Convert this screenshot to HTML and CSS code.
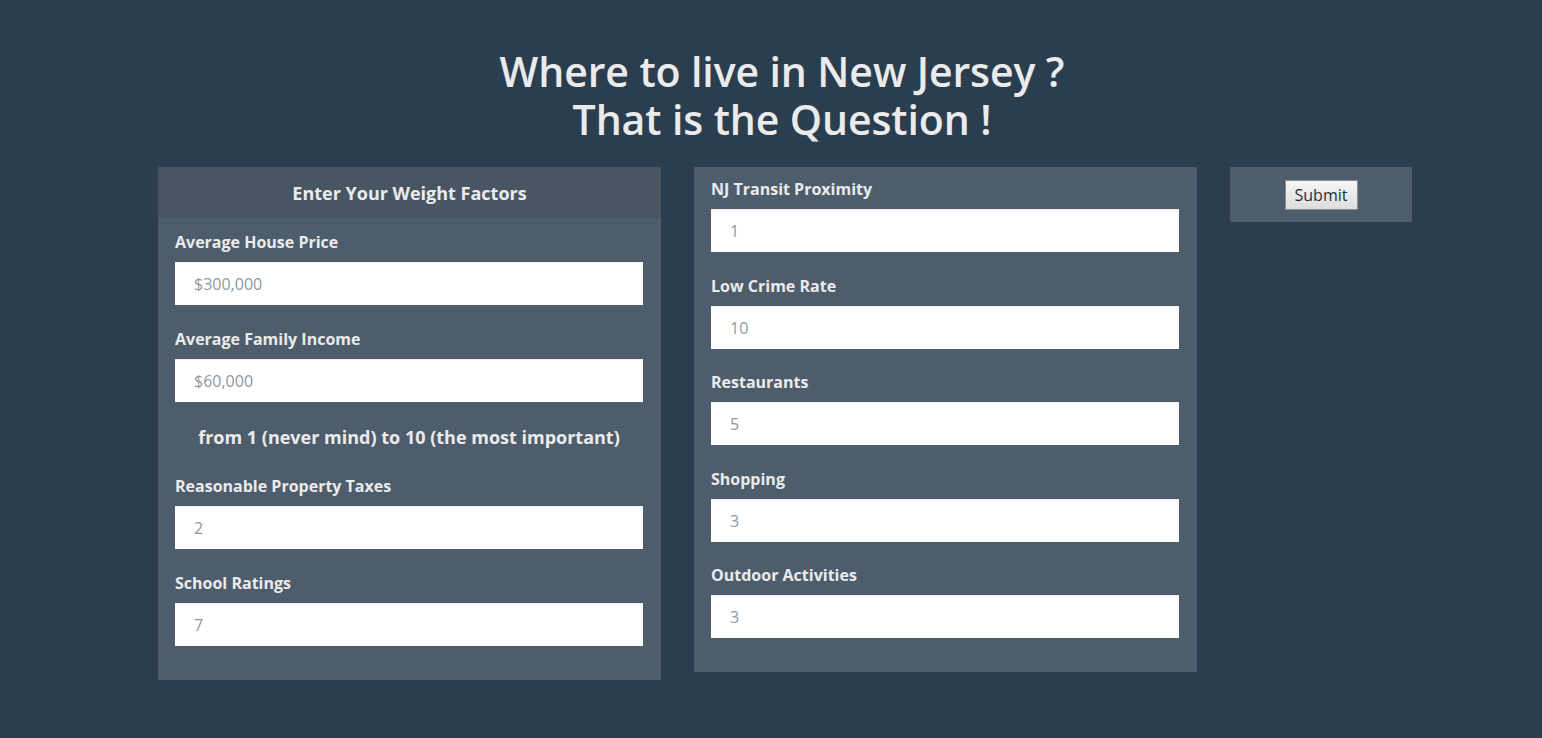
FILE: index.html
```html
<!DOCTYPE html>
<html>
<head>
<meta charset="utf-8">
<link rel="stylesheet" href="styles.css">
</head>
<body>
<h1 class="title"><span class="title-line">Where to live in New Jersey ?</span><span class="title-line">That is the Question !</span></h1>
<div class="layout">
  <div class="panel panel-left">
    <div class="panel-heading">Enter Your Weight Factors</div>
    <div class="panel-body">
      <div class="group">
        <label class="label">Average House Price</label>
        <input class="field" type="text" placeholder="$300,000">
      </div>
      <div class="group">
        <label class="label">Average Family Income</label>
        <input class="field" type="text" placeholder="$60,000">
      </div>
      <div class="hint">from 1 (never mind) to 10 (the most important)</div>
      <div class="group">
        <label class="label">Reasonable Property Taxes</label>
        <input class="field" type="text" placeholder="2">
      </div>
      <div class="group">
        <label class="label">School Ratings</label>
        <input class="field" type="text" placeholder="7">
      </div>
    </div>
  </div>
  <div class="panel panel-mid">
    <div class="panel-body">
      <div class="group">
        <label class="label">NJ Transit Proximity</label>
        <input class="field" type="text" placeholder="1">
      </div>
      <div class="group">
        <label class="label">Low Crime Rate</label>
        <input class="field" type="text" placeholder="10">
      </div>
      <div class="group">
        <label class="label">Restaurants</label>
        <input class="field" type="text" placeholder="5">
      </div>
      <div class="group">
        <label class="label">Shopping</label>
        <input class="field" type="text" placeholder="3">
      </div>
      <div class="group">
        <label class="label">Outdoor Activities</label>
        <input class="field" type="text" placeholder="3">
      </div>
    </div>
  </div>
  <div class="panel panel-submit">
    <button class="submit" type="button">Submit</button>
  </div>
</div>
</body>
</html>
```
FILE: styles.css
```css
html, body {
  margin: 0;
  padding: 0;
}
body {
  background: #2b3e50;
  color: #ebebeb;
  font-family: "Open Sans", "Noto Sans", sans-serif;
  height: 738px;
  overflow: hidden;
}
.title {
  margin: 0;
  padding: 47px 0 0 22px;
  height: 120px;
  box-sizing: content-box;
  text-align: center;
  font-size: 41px;
  line-height: 48px;
  font-weight: 600;
  letter-spacing: -0.1px;
}
.title-line {
  display: block;
  height: 48px;
}
.layout {
  display: flex;
  align-items: flex-start;
  gap: 33px;
  padding-left: 158px;
}
.panel {
  background: #4e5d6c;
}
.panel-left, .panel-mid {
  width: 503px;
}
.panel-heading {
  background: #485563;
  height: 51px;
  display: flex;
  align-items: center;
  justify-content: center;
  font-size: 18px;
  font-weight: 700;
}
.panel-left .panel-body {
  padding: 13px 18px 12px 17px;
}
.panel-mid .panel-body {
  padding: 11px 18px 11.5px 17px;
}
.group {
  margin-bottom: 22.5px;
}
.label {
  display: block;
  font-size: 16px;
  line-height: 22px;
  font-weight: 700;
  margin-bottom: 9px;
}
.field {
  display: block;
  width: 100%;
  height: 43px;
  box-sizing: border-box;
  border: none;
  outline: none;
  background: #fff;
  padding: 0 19px;
  font-family: "Open Sans", "Noto Sans", sans-serif;
  font-size: 16px;
  color: #2b3e50;
  border-top: 1px solid #f0f0f0;
}
.field::placeholder {
  color: #8e98a2;
}
.hint {
  text-align: center;
  font-size: 18px;
  font-weight: 700;
  line-height: 26px;
  margin-bottom: 25px;
}
.panel-submit {
  width: 182px;
  height: 55px;
  box-sizing: border-box;
  padding-top: 13px;
  display: flex;
  justify-content: center;
  align-items: flex-start;
}
.submit {
  width: 73px;
  height: 30px;
  border: 1px solid #8d8d8d;
  background: linear-gradient(#f6f6f6, #dddddd);
  color: #1f2f3f;
  font-family: "Open Sans", "Noto Sans", sans-serif;
  font-size: 16px;
  padding: 0;
  border-radius: 0;
}
```
